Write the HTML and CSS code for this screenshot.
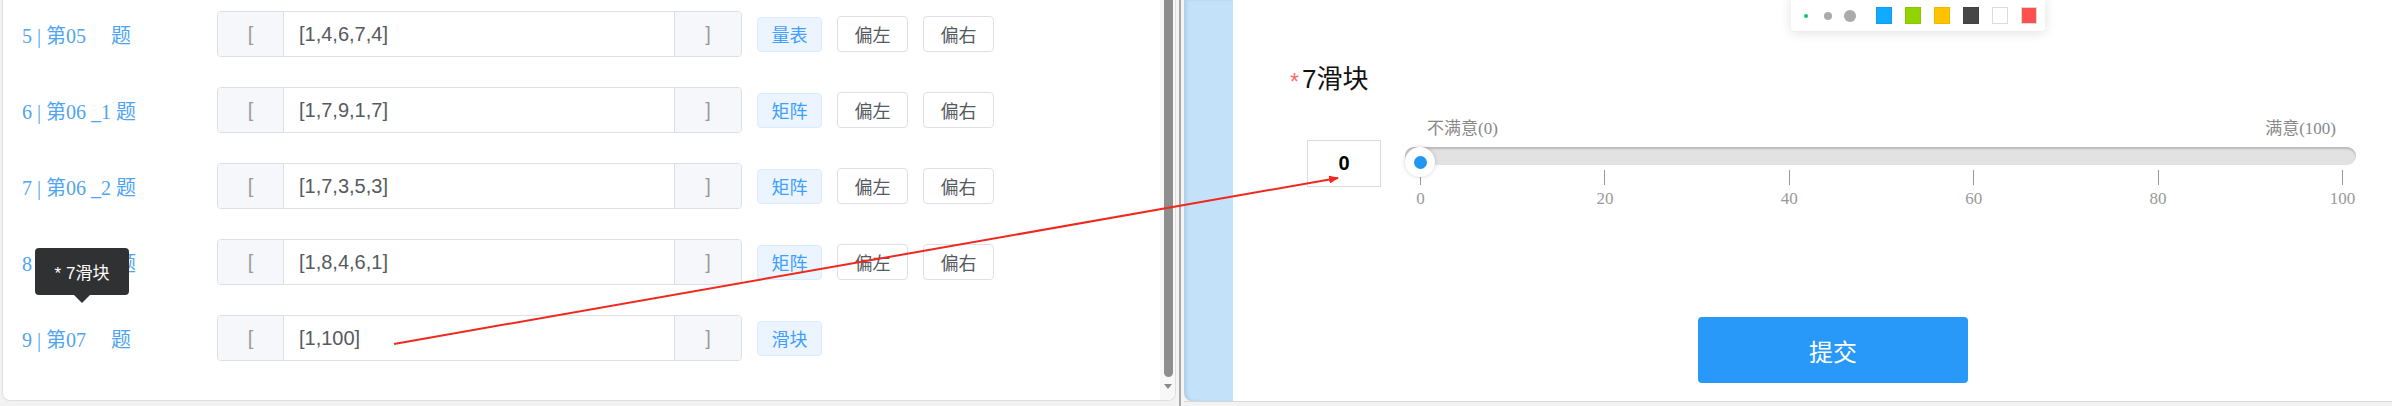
FILE: index.html
```html
<!DOCTYPE html>
<html lang="zh">
<head>
<meta charset="utf-8">
<title>滑块题</title>
<link rel="stylesheet" href="styles.css">
</head>
<body>
<div class="page">
  <section class="left">
    <div class="rows">
      <div class="row">
        <div class="label">5 | 第05 &nbsp; &nbsp; 题</div>
        <div class="group"><div class="pre">[</div><div class="input">[1,4,6,7,4]</div><div class="app">]</div></div>
        <span class="tag">量表</span>
        <button class="btn">偏左</button>
        <button class="btn">偏右</button>
      </div>
      <div class="row">
        <div class="label">6 | 第06 _1 题</div>
        <div class="group"><div class="pre">[</div><div class="input">[1,7,9,1,7]</div><div class="app">]</div></div>
        <span class="tag">矩阵</span>
        <button class="btn">偏左</button>
        <button class="btn">偏右</button>
      </div>
      <div class="row">
        <div class="label">7 | 第06 _2 题</div>
        <div class="group"><div class="pre">[</div><div class="input">[1,7,3,5,3]</div><div class="app">]</div></div>
        <span class="tag">矩阵</span>
        <button class="btn">偏左</button>
        <button class="btn">偏右</button>
      </div>
      <div class="row">
        <div class="label">8 | 第06 _3 题</div>
        <div class="group"><div class="pre">[</div><div class="input">[1,8,4,6,1]</div><div class="app">]</div></div>
        <span class="tag">矩阵</span>
        <button class="btn">偏左</button>
        <button class="btn">偏右</button>
      </div>
      <div class="row">
        <div class="label">9 | 第07 &nbsp; &nbsp; 题</div>
        <div class="group"><div class="pre">[</div><div class="input">[1,100]</div><div class="app">]</div></div>
        <span class="tag">滑块</span>
      </div>
    </div>
    <div class="scrollbar"><div class="sb-thumb"></div><div class="sb-arrow"></div></div>
  </section>
  <div class="splitter"><div class="split-line"></div></div>
  <section class="right">
    <div class="strip"></div>
    <div class="content">
      <div class="q-title"><span class="req">*</span>7滑块</div>
      <div class="slider-row">
        <div class="value-box">0</div>
        <div class="slider">
          <div class="ends"><span>不满意(0)</span><span>满意(100)</span></div>
          <div class="track-wrap">
            <div class="track"></div>
            <div class="knob"><div class="knob-dot"></div></div>
          </div>
          <div class="ticks">
            <div class="tick"><div class="tick-line"></div><div class="tick-label">0</div></div>
            <div class="tick"><div class="tick-line"></div><div class="tick-label">20</div></div>
            <div class="tick"><div class="tick-line"></div><div class="tick-label">40</div></div>
            <div class="tick"><div class="tick-line"></div><div class="tick-label">60</div></div>
            <div class="tick"><div class="tick-line"></div><div class="tick-label">80</div></div>
            <div class="tick"><div class="tick-line"></div><div class="tick-label">100</div></div>
          </div>
        </div>
      </div>
      <button class="submit">提交</button>
    </div>
  </section>
</div>

<div class="toolbar">
  <span class="dot-cell"><span class="dot d1"></span></span>
  <span class="dot-cell"><span class="dot d2"></span></span>
  <span class="dot-cell"><span class="dot d3"></span></span>
  <span class="swatch sw-blue"></span>
  <span class="swatch sw-green"></span>
  <span class="swatch sw-yellow"></span>
  <span class="swatch sw-dark"></span>
  <span class="swatch sw-white"></span>
  <span class="swatch sw-red"></span>
</div>

<div class="tooltip">* 7滑块</div>

<svg class="annot" width="2392" height="406" viewBox="0 0 2392 406">
  <defs>
    <marker id="ah" markerWidth="10" markerHeight="8" refX="9" refY="4" orient="auto" markerUnits="userSpaceOnUse">
      <path d="M0,0 L10,4 L0,8 Z" fill="#f0281e"/>
    </marker>
  </defs>
  <line x1="394" y1="344" x2="1338" y2="178" stroke="#f0281e" stroke-width="2" marker-end="url(#ah)"/>
</svg>
</body>
</html>
```

FILE: styles.css
```css
* { box-sizing: border-box; }

html, body {
  margin: 0;
  padding: 0;
}

body {
  width: 2392px;
  height: 406px;
  overflow: hidden;
  position: relative;
  background: #f2f2f2;
  font-family: "Liberation Sans", "Noto Sans CJK SC", sans-serif;
  color: #606266;
}

.page {
  display: flex;
  align-items: flex-start;
  height: 402px;
}

/* ---------- left panel ---------- */
.left {
  margin-left: 2px;
  width: 1174px;
  height: 401px;
  background: #fff;
  border: 1px solid #dedede;
  border-top: none;
  border-radius: 0 0 8px 8px;
  display: flex;
}

.rows {
  flex: 1;
  padding-top: 11px;
  display: flex;
  flex-direction: column;
  gap: 30px;
}

.row {
  height: 46px;
  display: flex;
  align-items: center;
}

.label {
  flex: 0 0 214px;
  padding-left: 19px;
  font-family: "Liberation Serif", "Noto Sans CJK SC", serif;
  font-size: 20px;
  color: #4fa4f3;
  white-space: nowrap;
}

.group {
  width: 525px;
  height: 46px;
  display: flex;
  border: 1px solid #dcdfe6;
  border-radius: 4px;
  overflow: hidden;
}

.pre, .app {
  width: 66px;
  background: #f5f7fa;
  color: #9a9a9a;
  font-size: 20px;
  display: flex;
  align-items: center;
  justify-content: center;
}

.pre { border-right: 1px solid #dcdfe6; }
.app { width: 67px; border-left: 1px solid #dcdfe6; }

.input {
  flex: 1;
  padding-left: 15px;
  display: flex;
  align-items: center;
  font-size: 20px;
  color: #555a60;
}

.tag {
  margin-left: 15px;
  width: 65px;
  height: 35px;
  display: flex;
  align-items: center;
  justify-content: center;
  background: #ecf5ff;
  border: 1px solid #d9ecff;
  border-radius: 4px;
  color: #409eff;
  font-size: 18px;
}

.btn {
  margin-left: 15px;
  width: 71px;
  height: 36px;
  padding: 0;
  background: #fff;
  border: 1px solid #dcdfe6;
  border-radius: 4px;
  color: #555a60;
  font-family: "Liberation Sans", "Noto Sans CJK SC", sans-serif;
  font-size: 18px;
}

.scrollbar {
  flex: 0 0 15px;
  background: #f8f8f8;
  display: flex;
  flex-direction: column;
  align-items: flex-start;
  border-radius: 0 0 7px 0;
}

.sb-thumb {
  margin-left: 4px;
  width: 9px;
  height: 377px;
  background: #8e8e8e;
  border-radius: 0 0 5px 5px;
}

.sb-arrow {
  margin-top: 7px;
  margin-left: 4px;
  width: 0;
  height: 0;
  border-left: 4.5px solid transparent;
  border-right: 4.5px solid transparent;
  border-top: 5px solid #8a8a8a;
}

/* ---------- splitter ---------- */
.splitter {
  flex: 0 0 8px;
  height: 406px;
  background: #f4f4f4;
  display: flex;
  justify-content: center;
}

.split-line {
  width: 2px;
  height: 100%;
  background: #a8a8a8;
}

/* ---------- right panel ---------- */
.right {
  flex: 1;
  height: 402px;
  display: flex;
  border-bottom: 1px solid #d8d8d8;
}

.strip {
  flex: 0 0 49px;
  background: #c3e2fa;
  border-radius: 0 0 0 8px;
  box-shadow: inset 3px 0 3px rgba(0, 0, 0, 0.08);
}

.content {
  flex: 1;
  background: #fff;
}

.q-title {
  margin-top: 64px;
  padding-left: 57px;
  height: 30px;
  line-height: 30px;
  font-size: 26px;
  color: #111;
  display: flex;
  align-items: center;
}

.req {
  color: #f56c6c;
  font-size: 23px;
  line-height: 30px;
  margin-top: 6px;
  margin-right: 3px;
}

.slider-row {
  margin-top: 24px;
  margin-left: 74px;
  display: flex;
  align-items: flex-start;
}

.value-box {
  margin-top: 22px;
  width: 74px;
  height: 47px;
  border: 1px solid #dcdcdc;
  display: flex;
  align-items: center;
  justify-content: center;
  font-weight: bold;
  font-size: 20px;
  color: #000;
}

.slider {
  margin-left: 24px;
  width: 951px;
}

.ends {
  height: 22px;
  line-height: 22px;
  display: flex;
  justify-content: space-between;
  padding: 0 20px 0 22px;
  font-family: "Liberation Serif", "Noto Sans CJK SC", serif;
  font-size: 17px;
  color: #888;
}

.track-wrap {
  margin-top: 7px;
  height: 23px;
  position: relative;
}

.track {
  margin-top: 5px;
  height: 18px;
  background: #e2e2e2;
  border-radius: 9px;
  box-shadow: inset 0 2px 2px rgba(0, 0, 0, 0.18);
}

.knob {
  position: absolute;
  left: 0;
  top: 0;
  width: 30px;
  height: 30px;
  border-radius: 50%;
  background: #fff;
  box-shadow: 0 0 4px rgba(0, 0, 0, 0.18);
  display: flex;
  align-items: center;
  justify-content: center;
}

.knob-dot {
  width: 13px;
  height: 13px;
  border-radius: 50%;
  background: #2196f3;
}

.ticks {
  display: flex;
  justify-content: space-between;
  padding: 0 13px 0 15px;
}

.tick {
  width: 1px;
  display: flex;
  flex-direction: column;
  align-items: center;
}

.tick-line {
  width: 1px;
  height: 15px;
  background: #999;
}

.tick-label {
  margin-top: 4px;
  line-height: 20px;
  font-family: "Liberation Serif", serif;
  font-size: 17px;
  color: #999;
  white-space: nowrap;
}

.submit {
  display: block;
  margin-top: 108px;
  margin-left: 465px;
  width: 270px;
  height: 66px;
  background: #2899f8;
  border: none;
  border-radius: 4px;
  color: #fff;
  font-family: "Liberation Sans", "Noto Sans CJK SC", sans-serif;
  font-size: 24px;
}

/* ---------- overlays ---------- */
.toolbar {
  position: absolute;
  left: 1791px;
  top: -6px;
  width: 254px;
  height: 37px;
  padding: 6px 8px 0 4px;
  background: #fff;
  border-radius: 4px;
  box-shadow: 0 2px 12px rgba(0, 0, 0, 0.12);
  display: flex;
  align-items: center;
}

.dot-cell {
  width: 22px;
  display: flex;
  justify-content: center;
  align-items: center;
}

.dot {
  border-radius: 50%;
  background: #ababab;
}

.d1 { width: 4px; height: 4px; background: #19c06a; }
.d2 { width: 8px; height: 8px; }
.d3 { width: 12px; height: 12px; }

.swatch {
  width: 16px;
  height: 17px;
  margin-left: 13px;
  border: 1px solid rgba(0, 0, 0, 0.06);
}

.sw-blue { margin-left: 15px; background: #10aaff; }
.sw-green { background: #92d400; }
.sw-yellow { background: #ffc300; }
.sw-dark { background: #474747; }
.sw-white { background: #fff; border-color: #dcdcdc; }
.sw-red { background: #ff5050; border: 1px solid #dadada; }

.tooltip {
  position: absolute;
  left: 35px;
  top: 248px;
  width: 94px;
  height: 47px;
  background: #303133;
  border-radius: 4px;
  color: #fff;
  font-size: 17px;
  display: flex;
  align-items: center;
  justify-content: center;
}

.tooltip::after {
  content: "";
  position: absolute;
  left: 39px;
  bottom: -8px;
  border-left: 8px solid transparent;
  border-right: 8px solid transparent;
  border-top: 8px solid #303133;
}

.annot {
  position: absolute;
  left: 0;
  top: 0;
  pointer-events: none;
}
```
